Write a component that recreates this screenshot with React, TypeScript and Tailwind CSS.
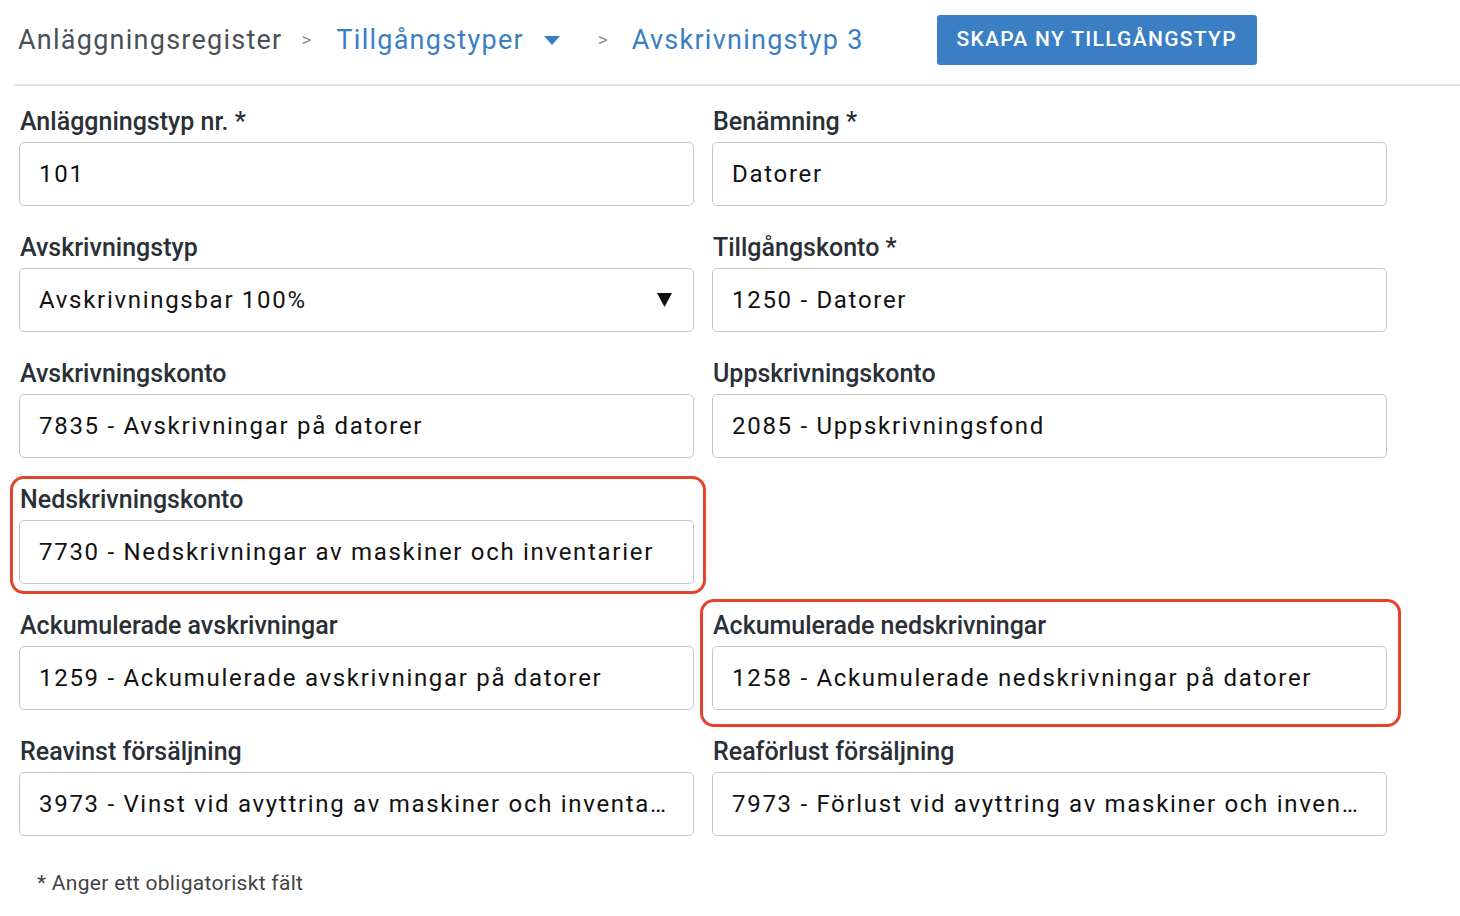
import React from "react";

type Field = {
  label: string;
  value: string;
  select?: boolean;
  mark?: "left" | "right";
};

const rows: (Field | null)[][] = [
  [
    { label: "Anläggningstyp nr. *", value: "101" },
    { label: "Benämning *", value: "Datorer" },
  ],
  [
    { label: "Avskrivningstyp", value: "Avskrivningsbar 100%", select: true },
    { label: "Tillgångskonto *", value: "1250 - Datorer" },
  ],
  [
    { label: "Avskrivningskonto", value: "7835 - Avskrivningar på datorer" },
    { label: "Uppskrivningskonto", value: "2085 - Uppskrivningsfond" },
  ],
  [
    {
      label: "Nedskrivningskonto",
      value: "7730 - Nedskrivningar av maskiner och inventarier",
      mark: "left",
    },
    null,
  ],
  [
    { label: "Ackumulerade avskrivningar", value: "1259 - Ackumulerade avskrivningar på datorer" },
    {
      label: "Ackumulerade nedskrivningar",
      value: "1258 - Ackumulerade nedskrivningar på datorer",
      mark: "right",
    },
  ],
  [
    { label: "Reavinst försäljning", value: "3973 - Vinst vid avyttring av maskiner och inventarier" },
    { label: "Reaförlust försäljning", value: "7973 - Förlust vid avyttring av maskiner och inventarier" },
  ],
];

function FieldBox({ f }: { f: Field }) {
  return (
    <div className="relative h-[126px]">
      {f.mark === "left" && (
        <div className="pointer-events-none absolute left-[-9px] right-[-12px] top-[-10px] bottom-[18px] rounded-[14px] border-[3px] border-[#e5432c]" />
      )}
      {f.mark === "right" && (
        <div className="pointer-events-none absolute left-[-12px] right-[-14px] top-[-13px] bottom-[11px] rounded-[14px] border-[3px] border-[#e5432c]" />
      )}
      <div className="flex h-[34px] items-center pb-[8px] pl-[1px] text-[25px] font-medium leading-none text-[#2a3036]">
        {f.label}
      </div>
      <div className="flex h-[64px] items-center rounded-[5px] border border-[#c6c6c6] bg-white pl-[19px] pr-[21px]">
        <div className="min-w-0 flex-1 truncate py-[4px] text-[24px] leading-[1.2] tracking-[1.7px] text-[#121212]">
          {f.value}
        </div>
        {f.select && (
          <svg className="ml-2 shrink-0" width="15" height="14" viewBox="0 0 15 14">
            <path d="M0 0 H15 L7.5 14 Z" fill="#111" />
          </svg>
        )}
      </div>
    </div>
  );
}

export default function App() {
  return (
    <div
      className="h-[916px] w-[1460px] overflow-hidden bg-white"
      style={{ fontFamily: "Roboto, 'Liberation Sans', sans-serif" }}
    >
      <div className="ml-[14px] flex h-[86px] items-center border-b-2 border-[#e3e3e3] pb-[4px] pl-[4px]">
        <span className="text-[27px] tracking-[1.25px] text-[#4a5058]">Anläggningsregister</span>
        <span className="ml-[19px] text-[19px] text-[#8d8d8d]">&gt;</span>
        <span className="ml-[25px] text-[27px] tracking-[1.25px] text-[#3a7ec4]">Tillgångstyper</span>
        <svg className="ml-[20px]" width="16" height="9" viewBox="0 0 16 9">
          <path d="M0 0 H16 L8 9 Z" fill="#3a7ec4" />
        </svg>
        <span className="ml-[38px] text-[19px] text-[#8d8d8d]">&gt;</span>
        <span className="ml-[24px] text-[27px] tracking-[1.25px] text-[#3a7ec4]">Avskrivningstyp 3</span>
        <button className="ml-[73px] flex h-[50px] w-[320px] items-center justify-center rounded-[3px] bg-[#3a7fc4] text-[21px] font-medium tracking-[1.3px] text-white">
          SKAPA NY TILLGÅNGSTYP
        </button>
      </div>

      <div className="ml-[19px] mt-[22px] grid w-[1368px] grid-cols-2 gap-x-[18px]">
        {rows.map((r, i) => (
          <React.Fragment key={i}>
            {r.map((f, j) => (f ? <FieldBox key={j} f={f} /> : <div key={j} />))}
          </React.Fragment>
        ))}
      </div>

      <div className="ml-[37px] mt-[7px] text-[21px] leading-[1.2] tracking-[0.3px] text-[#444]">
        * Anger ett obligatoriskt fält
      </div>
    </div>
  );
}
